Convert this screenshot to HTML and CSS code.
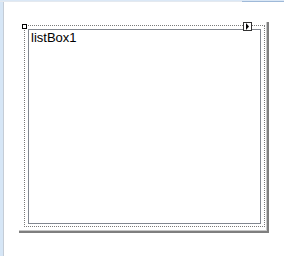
FILE: index.html
```html
<!DOCTYPE html>
<html>
<head>
<meta charset="utf-8">
<link rel="stylesheet" href="styles.css">
</head>
<body>
<div class="page">
  <div class="topbar"><div class="topbar-dark"></div></div>
  <div class="main">
    <div class="leftbar"></div>
    <div class="canvas">
      <div class="frame">
        <span class="grip"></span>
        <span class="smart"><svg width="5" height="7" viewBox="0 0 5 7"><path d="M1 0 L4 3.5 L1 7 Z" fill="#000"/></svg></span>
        <div class="selection">
          <div class="listbox">
            <div class="item">listBox1</div>
          </div>
        </div>
      </div>
    </div>
  </div>
</div>
</body>
</html>
```
FILE: styles.css
```css
html, body {
  margin: 0;
  padding: 0;
  background: #ffffff;
}
.page {
  width: 284px;
  height: 256px;
  display: flex;
  flex-direction: column;
  overflow: hidden;
}
.topbar {
  height: 1px;
  background: #dbe8f6;
  border-bottom: 1px solid #e4e9ef;
  position: relative;
}
.topbar-dark {
  position: absolute;
  left: 242px;
  right: 0;
  top: 1px;
  height: 1px;
  background: #9fb9d8;
}
.main {
  flex: 1;
  display: flex;
}
.leftbar {
  width: 3px;
  background: #d6e6f6;
  border-right: 1px solid #c4ccd6;
}
.canvas {
  flex: 1;
  padding: 20px 0 0 15px;
}
.frame {
  position: relative;
  width: 241px;
  padding: 3px 2px 4px 5px;
  border-right: 2px solid #7f7f7f;
  border-bottom: 2px solid #7f7f7f;
  box-shadow: inset -3px -3px 0 -2px #c8c8c8;
}
.selection {
  border: 1px dotted #7a7a7a;
  padding: 3px 3px 2px 3px;
}
.listbox {
  border: 1px solid #828790;
  background: #fff;
  padding: 2px 2px;
  box-sizing: border-box;
  height: 195px;
}
.item {
  font-family: "Liberation Sans", Arial, sans-serif;
  font-size: 13px;
  line-height: 12px;
  color: #000;
}
.grip {
  position: absolute;
  left: 3px;
  top: 2px;
  width: 3px;
  height: 3px;
  border: 1px solid #000;
  background: #fff;
}
.smart {
  position: absolute;
  left: 224px;
  top: 0;
  width: 7px;
  height: 7px;
  border: 1px solid #333;
  background: #fff;
  display: flex;
  align-items: center;
  justify-content: center;
}
.smart svg {
  display: block;
}
```
